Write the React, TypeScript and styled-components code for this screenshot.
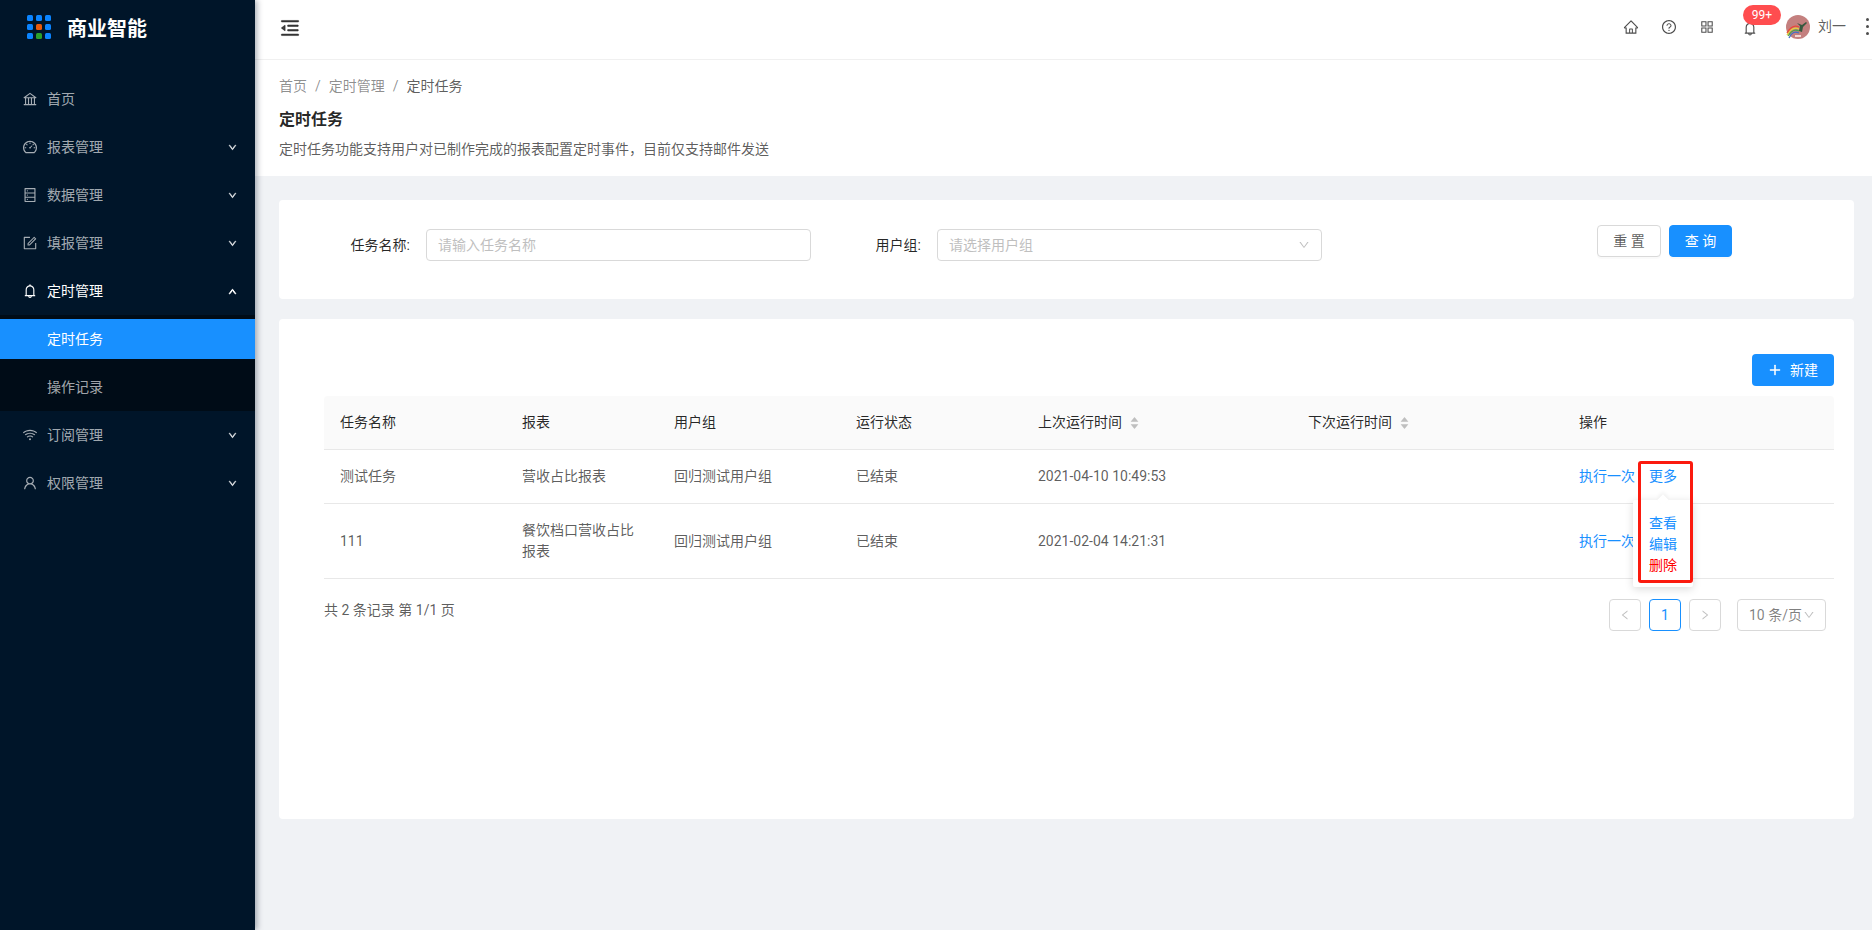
import type { ReactNode } from "react";
import styled, { createGlobalStyle } from "styled-components";
import {
  AiFillCaretDown,
  AiFillCaretUp,
  AiOutlineAppstore,
  AiOutlineBank,
  AiOutlineBell,
  AiOutlineDashboard,
  AiOutlineDatabase,
  AiOutlineDown,
  AiOutlineForm,
  AiOutlineHome,
  AiOutlineLeft,
  AiOutlineMenuFold,
  AiOutlinePlus,
  AiOutlineQuestionCircle,
  AiOutlineRight,
  AiOutlineUser,
  AiOutlineUp,
  AiOutlineWifi,
} from "react-icons/ai";

type MenuEntry = {
  label: string;
  icon: ReactNode;
  arrow?: boolean;
  open?: boolean;
  children?: { label: string; active?: boolean }[];
};

const MENU: MenuEntry[] = [
  { label: "首页", icon: <AiOutlineBank /> },
  { label: "报表管理", icon: <AiOutlineDashboard />, arrow: true },
  { label: "数据管理", icon: <AiOutlineDatabase />, arrow: true },
  { label: "填报管理", icon: <AiOutlineForm />, arrow: true },
  {
    label: "定时管理",
    icon: <AiOutlineBell />,
    arrow: true,
    open: true,
    children: [{ label: "定时任务", active: true }, { label: "操作记录" }],
  },
  { label: "订阅管理", icon: <AiOutlineWifi />, arrow: true },
  { label: "权限管理", icon: <AiOutlineUser />, arrow: true },
];

const ROWS = [
  {
    name: "测试任务",
    report: "营收占比报表",
    group: "回归测试用户组",
    status: "已结束",
    last: "2021-04-10 10:49:53",
    popover: true,
  },
  {
    name: "111",
    report: "餐饮档口营收占比报表",
    group: "回归测试用户组",
    status: "已结束",
    last: "2021-02-04 14:21:31",
    popover: false,
  },
];

const COLUMNS = [182, 152, 182, 182, 270, 271, 271];
const LOGO_DOTS = ["#0a84ff", "#0a84ff", "#0a84ff", "#0a84ff", "#e8590c", "#0a84ff", "#0a84ff", "#2ba02b", "#0a84ff"];

function SortHeader({ children }: { children: ReactNode }) {
  return (
    <SortCell>
      {children}
      <SortCarets>
        <AiFillCaretUp />
        <AiFillCaretDown />
      </SortCarets>
    </SortCell>
  );
}

function Avatar() {
  return (
    <AvatarSvg viewBox="0 0 24 24">
      <circle cx="12" cy="12" r="12" fill="#c4807f" />
      <path d="M1 20 C5 13 9 12 13 14" stroke="#e5d13c" strokeWidth="1.3" fill="none" />
      <path d="M1 18 C5 11 9 10 13 12" stroke="#e8483c" strokeWidth="1.3" fill="none" />
      <path d="M2 21 C6 15 9 14 13 16" stroke="#49a64a" strokeWidth="1.3" fill="none" />
      <path d="M3 23 C6 17 9 16 13 18" stroke="#3f6fc9" strokeWidth="1.3" fill="none" />
      <path d="M11 8 L16 10 L20 7 L21 8 L17 12 L16 17 L13 16 L14 11 Z" fill="#39583f" />
      <rect x="9" y="20" width="6" height="2" fill="#f0d8d4" />
    </AvatarSvg>
  );
}

function MorePopover() {
  return (
    <>
      <Popover>
        <PopoverArrow />
        <PopoverItem>查看</PopoverItem>
        <PopoverItem>编辑</PopoverItem>
        <PopoverItem $danger>删除</PopoverItem>
      </Popover>
      <RedBox />
    </>
  );
}

export default function App() {
  return (
    <>
      <GlobalStyle />
      <Page>
        <Sider>
          <Brand>
            <LogoGrid>
              {LOGO_DOTS.map((color, i) => (
                <LogoDot key={i} $color={color} />
              ))}
            </LogoGrid>
            <BrandName>商业智能</BrandName>
          </Brand>
          <Menu>
            {MENU.map((item) => (
              <li key={item.label}>
                <MenuItem $open={item.open}>
                  <MenuIcon>{item.icon}</MenuIcon>
                  {item.label}
                  {item.arrow && <MenuArrow>{item.open ? <AiOutlineUp /> : <AiOutlineDown />}</MenuArrow>}
                </MenuItem>
                {item.children && (
                  <SubMenu>
                    {item.children.map((child) => (
                      <SubItem key={child.label} $active={child.active}>
                        {child.label}
                      </SubItem>
                    ))}
                  </SubMenu>
                )}
              </li>
            ))}
          </Menu>
        </Sider>

        <Main>
          <TopBar>
            <CollapseIcon>
              <AiOutlineMenuFold />
            </CollapseIcon>
            <TopActions>
              <TopIcon>
                <AiOutlineHome />
              </TopIcon>
              <TopIcon>
                <AiOutlineQuestionCircle />
              </TopIcon>
              <TopIcon>
                <AiOutlineAppstore />
              </TopIcon>
              <BellWrap>
                <AiOutlineBell />
                <Badge>99+</Badge>
              </BellWrap>
              <Avatar />
              <UserName>刘一</UserName>
              <Dots>
                <i />
                <i />
                <i />
              </Dots>
            </TopActions>
          </TopBar>

          <PageHead>
            <Breadcrumb>
              <span>首页</span>
              <Sep>/</Sep>
              <span>定时管理</span>
              <Sep>/</Sep>
              <CrumbCurrent>定时任务</CrumbCurrent>
            </Breadcrumb>
            <PageTitle>定时任务</PageTitle>
            <PageDesc>定时任务功能支持用户对已制作完成的报表配置定时事件，目前仅支持邮件发送</PageDesc>
          </PageHead>

          <Content>
            <FilterCard>
              <Field>
                <FieldLabel $width={131}>任务名称:</FieldLabel>
                <TextInput>请输入任务名称</TextInput>
              </Field>
              <Field $gap={48}>
                <FieldLabel $width={62}>用户组:</FieldLabel>
                <SelectBox>
                  请选择用户组
                  <AiOutlineDown />
                </SelectBox>
              </Field>
              <FilterActions>
                <Button>重 置</Button>
                <Button $primary>查 询</Button>
              </FilterActions>
            </FilterCard>

            <TableCard>
              <Toolbar>
                <NewButton>
                  <AiOutlinePlus />
                  新建
                </NewButton>
              </Toolbar>
              <Table>
                <colgroup>
                  {COLUMNS.map((width, i) => (
                    <col key={i} width={width} />
                  ))}
                </colgroup>
                <thead>
                  <tr>
                    <th>任务名称</th>
                    <th>报表</th>
                    <th>用户组</th>
                    <th>运行状态</th>
                    <th>
                      <SortHeader>上次运行时间</SortHeader>
                    </th>
                    <th>
                      <SortHeader>下次运行时间</SortHeader>
                    </th>
                    <th>操作</th>
                  </tr>
                </thead>
                <tbody>
                  {ROWS.map((row) => (
                    <tr key={row.name}>
                      <td>{row.name}</td>
                      <td>{row.report}</td>
                      <td>{row.group}</td>
                      <td>{row.status}</td>
                      <td>{row.last}</td>
                      <td />
                      <td>
                        <RowActions>
                          <LinkText>执行一次</LinkText>
                          {row.popover && (
                            <MoreWrap>
                              <LinkText>更多</LinkText>
                              <MorePopover />
                            </MoreWrap>
                          )}
                        </RowActions>
                      </td>
                    </tr>
                  ))}
                </tbody>
              </Table>
              <TableFooter>
                <Total>共 2 条记录 第 1/1 页</Total>
                <Pager>
                  <PagerBtn>
                    <AiOutlineLeft />
                  </PagerBtn>
                  <PagerBtn $current>1</PagerBtn>
                  <PagerBtn>
                    <AiOutlineRight />
                  </PagerBtn>
                  <SizeSelect>
                    10 条/页
                    <AiOutlineDown />
                  </SizeSelect>
                </Pager>
              </TableFooter>
            </TableCard>
          </Content>
        </Main>
      </Page>
    </>
  );
}

const GlobalStyle = createGlobalStyle`
  html, body {
    margin: 0;
    height: 100%;
    overflow: hidden;
  }
  body {
    font-family: Roboto, "Noto Sans CJK SC", sans-serif;
    font-size: 14px;
    line-height: 21px;
    color: rgba(0, 0, 0, 0.65);
  }
  * {
    box-sizing: border-box;
  }
`;

const Page = styled.div`
  display: flex;
  height: 930px;
  background: #f0f2f5;
`;

const Sider = styled.aside`
  width: 255px;
  flex: none;
  background: #001529;
  box-shadow: 2px 0 6px rgba(0, 21, 41, 0.35);
  z-index: 2;
`;

const Brand = styled.div`
  display: flex;
  align-items: center;
  gap: 16px;
  height: 54px;
  padding-left: 27px;
`;

const LogoGrid = styled.div`
  display: grid;
  grid-template-columns: repeat(3, 6px);
  gap: 3px;
`;

const LogoDot = styled.span<{ $color: string }>`
  width: 6px;
  height: 6px;
  border-radius: 1.5px;
  background: ${({ $color }) => $color};
`;

const BrandName = styled.div`
  margin-top: 4px;
  color: #fff;
  font-size: 20px;
  font-weight: 700;
  line-height: 28px;
`;

const Menu = styled.ul`
  list-style: none;
  margin: 25px 0 0;
  padding: 0;
`;

const MenuItem = styled.div<{ $open?: boolean }>`
  display: flex;
  align-items: center;
  height: 40px;
  margin-bottom: ${({ $open }) => ($open ? "4px" : "8px")};
  padding: 0 18px 0 47px;
  position: relative;
  color: ${({ $open }) => ($open ? "#fff" : "rgba(255, 255, 255, 0.65)")};
`;

const MenuIcon = styled.span`
  position: absolute;
  left: 22px;
  top: 12px;
  display: flex;
  font-size: 16px;
`;

const MenuArrow = styled.span`
  display: flex;
  margin-left: auto;
  font-size: 9px;

  svg {
    stroke: currentColor;
    stroke-width: 110;
  }
`;

const SubMenu = styled.ul`
  list-style: none;
  margin: 0 0 4px;
  padding: 4px 0;
  background: #000c17;
`;

const SubItem = styled.li<{ $active?: boolean }>`
  height: 40px;
  line-height: 40px;
  padding-left: 47px;
  color: ${({ $active }) => ($active ? "#fff" : "rgba(255, 255, 255, 0.65)")};
  background: ${({ $active }) => ($active ? "#1890ff" : "transparent")};

  & + & {
    margin-top: 8px;
  }
`;

const Main = styled.main`
  flex: 1;
  min-width: 0;
  display: flex;
  flex-direction: column;
`;

const TopBar = styled.header`
  display: flex;
  align-items: center;
  justify-content: space-between;
  height: 60px;
  flex: none;
  padding-left: 24px;
  background: #fff;
  border-bottom: 1px solid #f0f0f0;
`;

const CollapseIcon = styled.span`
  display: flex;
  margin-top: -3px;
  font-size: 22px;
  color: rgba(0, 0, 0, 0.75);

  svg {
    stroke: currentColor;
    stroke-width: 25;
  }
`;

const TopActions = styled.div`
  display: flex;
  align-items: center;
  margin-right: 1px;
  height: 100%;
`;

const TopIcon = styled.span`
  display: flex;
  width: 38px;
  justify-content: center;
  font-size: 16px;
  color: rgba(0, 0, 0, 0.7);
  margin-top: -5px;
`;

const BellWrap = styled.span`
  position: relative;
  display: flex;
  width: 16px;
  margin: -2px 21px 0 16px;
  font-size: 17px;
  color: rgba(0, 0, 0, 0.7);
`;

const Badge = styled.span`
  position: absolute;
  left: 1px;
  top: -15px;
  height: 20px;
  min-width: 38px;
  padding: 0 7px;
  border-radius: 10px;
  background: #ff4d4f;
  color: #fff;
  font-size: 12px;
  line-height: 20px;
  text-align: center;
`;

const AvatarSvg = styled.svg`
  width: 24px;
  height: 24px;
  flex: none;
  margin-left: 7px;
  margin-top: -6px;
`;

const UserName = styled.span`
  margin: -6px 0 0 8px;
  color: rgba(0, 0, 0, 0.65);
`;

const Dots = styled.span`
  display: flex;
  flex-direction: column;
  gap: 4px;
  margin: -6px 2px 0 20px;

  i {
    width: 3px;
    height: 3px;
    border-radius: 50%;
    background: rgba(0, 0, 0, 0.7);
  }
`;

const PageHead = styled.section`
  height: 116px;
  flex: none;
  padding: 16px 24px 0;
  background: #fff;
`;

const Breadcrumb = styled.div`
  display: flex;
  color: rgba(0, 0, 0, 0.45);
`;

const Sep = styled.span`
  margin: 0 8px;
`;

const CrumbCurrent = styled.span`
  color: rgba(0, 0, 0, 0.65);
`;

const PageTitle = styled.h1`
  margin: 11px 0 0;
  font-size: 16px;
  font-weight: 700;
  line-height: 24px;
  color: rgba(0, 0, 0, 0.85);
`;

const PageDesc = styled.p`
  margin: 7px 0 0;
  color: rgba(0, 0, 0, 0.65);
`;

const Content = styled.div`
  padding: 24px 18px 0 24px;
  display: flex;
  flex-direction: column;
  gap: 20px;
`;

const FilterCard = styled.section`
  display: flex;
  align-items: flex-start;
  height: 99px;
  padding: 25px 122px 0 0;
  background: #fff;
  border-radius: 4px;
`;

const Field = styled.div<{ $gap?: number }>`
  display: flex;
  align-items: center;
  gap: 16px;
  margin-top: 4px;
  margin-left: ${({ $gap }) => $gap ?? 0}px;
`;

const FieldLabel = styled.label<{ $width: number }>`
  width: ${({ $width }) => $width}px;
  text-align: right;
  white-space: nowrap;
  color: rgba(0, 0, 0, 0.85);
`;

const TextInput = styled.div`
  width: 385px;
  height: 32px;
  padding: 0 11px;
  line-height: 30px;
  border: 1px solid #d9d9d9;
  border-radius: 4px;
  color: #bfbfbf;
`;

const SelectBox = styled(TextInput)`
  display: flex;
  align-items: center;
  justify-content: space-between;

  svg {
    font-size: 12px;
    color: #bfbfbf;
  }
`;

const FilterActions = styled.div`
  display: flex;
  gap: 8px;
  margin-left: auto;
`;

const Button = styled.button<{ $primary?: boolean }>`
  appearance: none;
  height: 32px;
  width: ${({ $primary }) => ($primary ? "63px" : "64px")};
  padding: 0;
  border: 1px solid ${({ $primary }) => ($primary ? "#1890ff" : "#d9d9d9")};
  border-radius: 4px;
  background: ${({ $primary }) => ($primary ? "#1890ff" : "#fff")};
  color: ${({ $primary }) => ($primary ? "#fff" : "rgba(0, 0, 0, 0.65)")};
  font: inherit;
  box-shadow: 0 2px 0 rgba(0, 0, 0, 0.02);
`;

const TableCard = styled.section`
  height: 500px;
  padding: 35px 20px 0 45px;
  background: #fff;
  border-radius: 4px;
`;

const Toolbar = styled.div`
  display: flex;
  justify-content: flex-end;
  margin-bottom: 10px;
`;

const NewButton = styled.button`
  appearance: none;
  display: inline-flex;
  align-items: center;
  justify-content: center;
  gap: 8px;
  width: 82px;
  height: 32px;
  padding: 0;
  border: none;
  border-radius: 4px;
  background: #1890ff;
  color: #fff;
  font: inherit;

  svg {
    font-size: 14px;
    stroke: currentColor;
    stroke-width: 40;
  }
`;

const Table = styled.table`
  width: 100%;
  table-layout: fixed;
  border-collapse: separate;
  border-spacing: 0;

  th {
    height: 54px;
    padding: 0 16px;
    background: #fafafa;
    border-bottom: 1px solid #e8e8e8;
    text-align: left;
    font-weight: 400;
    color: rgba(0, 0, 0, 0.85);
  }
  th:first-child {
    border-top-left-radius: 4px;
  }
  th:last-child {
    border-top-right-radius: 4px;
  }
  td {
    padding: 16px;
    border-bottom: 1px solid #e8e8e8;
    color: rgba(0, 0, 0, 0.65);
  }
`;

const SortCell = styled.span`
  display: inline-flex;
  align-items: center;
  gap: 7px;
`;

const SortCarets = styled.span`
  display: inline-flex;
  flex-direction: column;
  font-size: 11px;
  color: #bfbfbf;

  svg + svg {
    margin-top: -4px;
  }
`;

const RowActions = styled.div`
  display: flex;
  gap: 14px;
`;

const LinkText = styled.span`
  color: #1890ff;
`;

const MoreWrap = styled.span`
  position: relative;
  display: inline-block;
`;

const Popover = styled.div`
  position: absolute;
  left: -16px;
  top: 34px;
  width: 60px;
  padding: 13px 16px 11px;
  background: #fff;
  border-radius: 2px;
  box-shadow: 0 2px 8px rgba(0, 0, 0, 0.15);
  z-index: 3;
`;

const PopoverArrow = styled.span`
  position: absolute;
  left: 26px;
  top: -4px;
  width: 8px;
  height: 8px;
  background: #fff;
  transform: rotate(45deg);
  box-shadow: -2px -2px 4px rgba(0, 0, 0, 0.05);
`;

const PopoverItem = styled.div<{ $danger?: boolean }>`
  color: ${({ $danger }) => ($danger ? "#ff0000" : "#1890ff")};
  white-space: nowrap;
`;

const RedBox = styled.span`
  position: absolute;
  left: -11px;
  top: -5px;
  width: 55px;
  height: 122px;
  border: 3px solid #fb1a0e;
  border-radius: 3px;
  z-index: 4;
  pointer-events: none;
`;

const TableFooter = styled.div`
  display: flex;
  justify-content: space-between;
  align-items: flex-start;
  padding-top: 15px;
`;

const Total = styled.div`
  margin-top: 6px;
  color: rgba(0, 0, 0, 0.65);
`;

const Pager = styled.div`
  display: flex;
  align-items: center;
  gap: 8px;
  padding-top: 5px;
  margin-right: 8px;
`;

const PagerBtn = styled.span<{ $current?: boolean }>`
  display: flex;
  align-items: center;
  justify-content: center;
  width: 32px;
  height: 32px;
  border: 1px solid ${({ $current }) => ($current ? "#1890ff" : "#d9d9d9")};
  border-radius: 4px;
  color: ${({ $current }) => ($current ? "#1890ff" : "#bfbfbf")};
  font-size: ${({ $current }) => ($current ? "14px" : "12px")};
`;

const SizeSelect = styled.span`
  display: flex;
  align-items: center;
  width: 89px;
  height: 32px;
  margin-left: 8px;
  padding: 0 0 0 11px;
  border: 1px solid #d9d9d9;
  border-radius: 4px;
  color: rgba(0, 0, 0, 0.5);
  white-space: nowrap;

  svg {
    margin-left: 1px;
    font-size: 12px;
    color: #bfbfbf;
  }
`;
